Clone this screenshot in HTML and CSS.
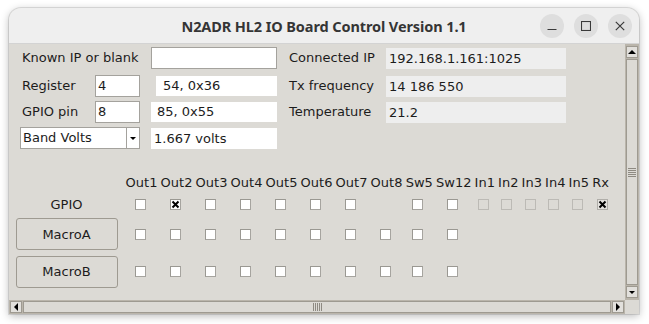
FILE: index.html
```html
<!DOCTYPE html>
<html>
<head>
<meta charset="utf-8">
<link rel="stylesheet" href="styles.css">
</head>
<body>
<div class="window">
  <div class="titlebar">
    <div class="title">N2ADR HL2 IO Board Control Version 1.1</div>
    <div class="wbtns">
      <span class="wbtn"><svg width="10" height="10" viewBox="0 0 10 10"><path d="M0.5 8.5H9.5" stroke="#3a3a3a" stroke-width="1.2"/></svg></span>
      <span class="wbtn"><svg width="10" height="10" viewBox="0 0 10 10"><rect x="0.5" y="0.5" width="9" height="9" fill="none" stroke="#3a3a3a" stroke-width="1.1"/></svg></span>
      <span class="wbtn"><svg width="10" height="10" viewBox="0 0 10 10"><path d="M0.8 0.8L9.2 9.2M9.2 0.8L0.8 9.2" stroke="#3a3a3a" stroke-width="1.2"/></svg></span>
    </div>
  </div>
  <div class="body">
    <div class="main">
      <div class="form">
        <div class="lbl span2">Known IP or blank</div>
        <div class="entry c4"></div>
        <div class="lbl c6">Connected IP</div>
        <div class="ro c7">192.168.1.161:1025</div>

        <div class="lbl c1">Register</div>
        <div class="entry c2">4</div>
        <div class="val c4 v1">54, 0x36</div>
        <div class="lbl c6">Tx frequency</div>
        <div class="ro c7">14 186 550</div>

        <div class="lbl c1">GPIO pin</div>
        <div class="entry c2">8</div>
        <div class="val c4 v2">85, 0x55</div>
        <div class="lbl c6">Temperature</div>
        <div class="ro c7">21.2</div>

        <div class="combo span2"><span class="ctext">Band Volts</span><span class="carrow"><span class="tri-down"></span></span></div>
        <div class="val c4 v3">1.667 volts</div>
      </div>

      <div class="io">
        <div></div>
        <div class="hd">Out1</div><div class="hd">Out2</div><div class="hd">Out3</div><div class="hd">Out4</div>
        <div class="hd">Out5</div><div class="hd">Out6</div><div class="hd">Out7</div><div class="hd">Out8</div>
        <div class="hd">Sw5</div><div class="hd">Sw12</div><div class="hd">In1</div><div class="hd">In2</div>
        <div class="hd">In3</div><div class="hd">In4</div><div class="hd">In5</div><div class="hd">Rx</div>

        <div class="rowlbl">GPIO</div>
        <div class="cell"><span class="cb"></span></div>
        <div class="cell"><span class="cb on"><svg width="9" height="9" viewBox="0 0 9 9"><path d="M1.5 1.5L7.5 7.5M7.5 1.5L1.5 7.5" stroke="#000" stroke-width="2"/></svg></span></div>
        <div class="cell"><span class="cb"></span></div>
        <div class="cell"><span class="cb"></span></div>
        <div class="cell"><span class="cb"></span></div>
        <div class="cell"><span class="cb"></span></div>
        <div class="cell"><span class="cb"></span></div>
        <div class="cell"></div>
        <div class="cell"><span class="cb"></span></div>
        <div class="cell"><span class="cb"></span></div>
        <div class="cell"><span class="cb dis"></span></div>
        <div class="cell"><span class="cb dis"></span></div>
        <div class="cell"><span class="cb dis"></span></div>
        <div class="cell"><span class="cb dis"></span></div>
        <div class="cell"><span class="cb dis"></span></div>
        <div class="cell rx"><span class="cb dis on"><svg width="9" height="9" viewBox="0 0 9 9"><path d="M1.5 1.5L7.5 7.5M7.5 1.5L1.5 7.5" stroke="#000" stroke-width="2"/></svg></span></div>

        <div class="rowlbl"><span class="btn">MacroA</span></div>
        <div class="cell"><span class="cb"></span></div>
        <div class="cell"><span class="cb"></span></div>
        <div class="cell"><span class="cb"></span></div>
        <div class="cell"><span class="cb"></span></div>
        <div class="cell"><span class="cb"></span></div>
        <div class="cell"><span class="cb"></span></div>
        <div class="cell"><span class="cb"></span></div>
        <div class="cell"><span class="cb"></span></div>
        <div class="cell"><span class="cb"></span></div>
        <div class="cell"><span class="cb"></span></div>
        <div></div><div></div><div></div><div></div><div></div><div></div>

        <div class="rowlbl"><span class="btn">MacroB</span></div>
        <div class="cell"><span class="cb"></span></div>
        <div class="cell"><span class="cb"></span></div>
        <div class="cell"><span class="cb"></span></div>
        <div class="cell"><span class="cb"></span></div>
        <div class="cell"><span class="cb"></span></div>
        <div class="cell"><span class="cb"></span></div>
        <div class="cell"><span class="cb"></span></div>
        <div class="cell"><span class="cb"></span></div>
        <div class="cell"><span class="cb"></span></div>
        <div class="cell"><span class="cb"></span></div>
        <div></div><div></div><div></div><div></div><div></div><div></div>
      </div>
    </div>
    <div class="vscroll">
      <div class="sbtn"><span class="tri-up"></span></div>
      <div class="vthumb"><span class="vgrip"></span></div>
      <div class="sbtn"><span class="tri-down"></span></div>
    </div>
  </div>
  <div class="bottom">
    <div class="hscroll">
      <div class="sbtn"><span class="tri-left"></span></div>
      <div class="hthumb"><span class="hgrip"></span></div>
      <div class="sbtn"><span class="tri-right"></span></div>
    </div>
    <div class="corner"></div>
  </div>
</div>
</body>
</html>
```
FILE: styles.css
```css
* { box-sizing: border-box; }
html, body { margin: 0; padding: 0; }
body {
  background: #ffffff;
  font-family: "DejaVu Sans", sans-serif;
  font-size: 13px;
  color: #1c1c1c;
  width: 649px;
  height: 324px;
  overflow: hidden;
}
.window {
  margin: 8px 0 0 9px;
  width: 630px;
  height: 306px;
  border-radius: 12px 12px 0 0;
  box-shadow: 0 0 0 1px rgba(0,0,0,0.10), 0 2px 9px rgba(0,0,0,0.28);
  overflow: hidden;
  display: flex;
  flex-direction: column;
  background: #dcdad5;
}
.titlebar {
  height: 36px;
  flex: none;
  background: #efefef;
  border-bottom: 1px solid #d3d3d3;
  position: relative;
  display: flex;
  align-items: center;
  justify-content: center;
}
.title {
  font-family: "Noto Sans", sans-serif;
  font-weight: bold;
  font-size: 14.5px;
  color: #353535;
  letter-spacing: -0.1px;
}
.wbtns {
  position: absolute;
  right: 7px;
  top: 6px;
  display: flex;
  gap: 10px;
}
.wbtn {
  width: 24px;
  height: 24px;
  border-radius: 50%;
  background: #dedede;
  display: flex;
  align-items: center;
  justify-content: center;
}
.body {
  height: 256px;
  flex: none;
  display: flex;
}
.main {
  flex: 1;
  min-width: 0;
}
.form {
  margin: 3px 0 0 11px;
  display: grid;
  grid-template-columns: 75px 45px 11px 126px 12px 97px 180px;
  grid-template-rows: 28px 26px 26px 22px;
  align-items: start;
}
.lbl { height: 22px; line-height: 22px; padding-left: 2px; white-space: nowrap; }
.span2 { grid-column: 1 / 3; }
.c1 { grid-column: 1; }
.c2 { grid-column: 2; }
.c4 { grid-column: 4; }
.c6 { grid-column: 6; padding-left: 0; }
.c7 { grid-column: 7; }
.entry {
  height: 22px;
  background: #ffffff;
  border: 1px solid #a4a29d;
  line-height: 20px;
  padding-left: 2px;
}
.val {
  height: 21px;
  background: #ffffff;
  line-height: 21px;
  margin-top: 1px;
  white-space: nowrap;
}
.v1 { margin-left: 5px; padding-left: 7px; height: 20px; line-height: 20px; }
.v2 { padding-left: 6px; height: 20px; line-height: 20px; }
.v3 { padding-left: 3px; }
.ro {
  height: 21px;
  margin-top: 1px;
  background: #eeeeee;
  line-height: 21px;
  padding-left: 3px;
}
.combo {
  height: 22px;
  background: #ffffff;
  border: 1px solid #a4a29d;
  display: flex;
}
.ctext { flex: 1; line-height: 20px; padding-left: 2px; }
.carrow {
  width: 13px;
  border-left: 1px solid #a4a29d;
  display: flex;
  align-items: center;
  justify-content: center;
}
.tri-down { width: 0; height: 0; border-left: 3px solid transparent; border-right: 3px solid transparent; border-top: 3px solid #000; }
.tri-up { width: 0; height: 0; border-left: 4px solid transparent; border-right: 4px solid transparent; border-bottom: 4px solid #000; }
.tri-left { width: 0; height: 0; border-top: 4px solid transparent; border-bottom: 4px solid transparent; border-right: 4px solid #000; }
.tri-right { width: 0; height: 0; border-top: 4px solid transparent; border-bottom: 4px solid transparent; border-left: 4px solid #000; }

.io {
  margin-top: 24px;
  display: grid;
  grid-template-columns: 115px repeat(8, 35px) 30.5px 38.5px repeat(5, 23.5px) 20px;
  grid-template-rows: 20px 22px 38px 37px;
}
.hd { text-align: center; line-height: 20px; white-space: nowrap; }
.rowlbl { display: flex; align-items: center; justify-content: center; }
.cell { display: flex; align-items: center; justify-content: center; padding-right: 3px; }
.cell.rx { padding-right: 0; padding-left: 4px; }
.cb {
  width: 11px;
  height: 11px;
  background: #ffffff;
  border: 1px solid #a6a49f;
  border-top-color: #9a9892;
  border-left-color: #9a9892;
  display: flex;
  align-items: center;
  justify-content: center;
}
.cb.dis { background: #dcdad5; border-color: #bcbab5; }
.cb.dis.on { background: #e4e2de; border-color: #b0aea9; }
.btn {
  width: 102px;
  height: 32px;
  border: 1px solid #9e9a91;
  border-radius: 3px;
  background: #dcdad5;
  display: flex;
  align-items: center;
  justify-content: center;
}

.vscroll {
  width: 14px;
  flex: none;
  background: #bab5ab;
  padding: 2px 1px 2px 1px;
  display: flex;
  flex-direction: column;
}
.sbtn {
  flex: none;
  width: 12px;
  height: 12px;
  background: #e2e0dc;
  border: 1px solid #9e9a91;
  display: flex;
  align-items: center;
  justify-content: center;
}
.vthumb {
  flex: 1;
  background: #dcdad5;
  border: 1px solid #9e9a91;
  margin: 1px 0;
  display: flex;
  align-items: center;
  justify-content: center;
}
.vgrip {
  width: 8px;
  height: 9px;
  background: repeating-linear-gradient(to bottom, #8e8a82 0 1px, transparent 1px 2px);
}
.bottom {
  height: 14px;
  flex: none;
  display: flex;
}
.hscroll {
  flex: 1;
  background: #bab5ab;
  padding: 1px;
  display: flex;
}
.hthumb {
  flex: 1;
  background: #dcdad5;
  border: 1px solid #9e9a91;
  margin: 0 1px;
  display: flex;
  align-items: center;
  justify-content: center;
}
.hgrip {
  width: 9px;
  height: 8px;
  background: repeating-linear-gradient(to right, #8e8a82 0 1px, transparent 1px 2px);
}
.corner {
  width: 14px;
  flex: none;
  background: #dcdad5;
}
```
